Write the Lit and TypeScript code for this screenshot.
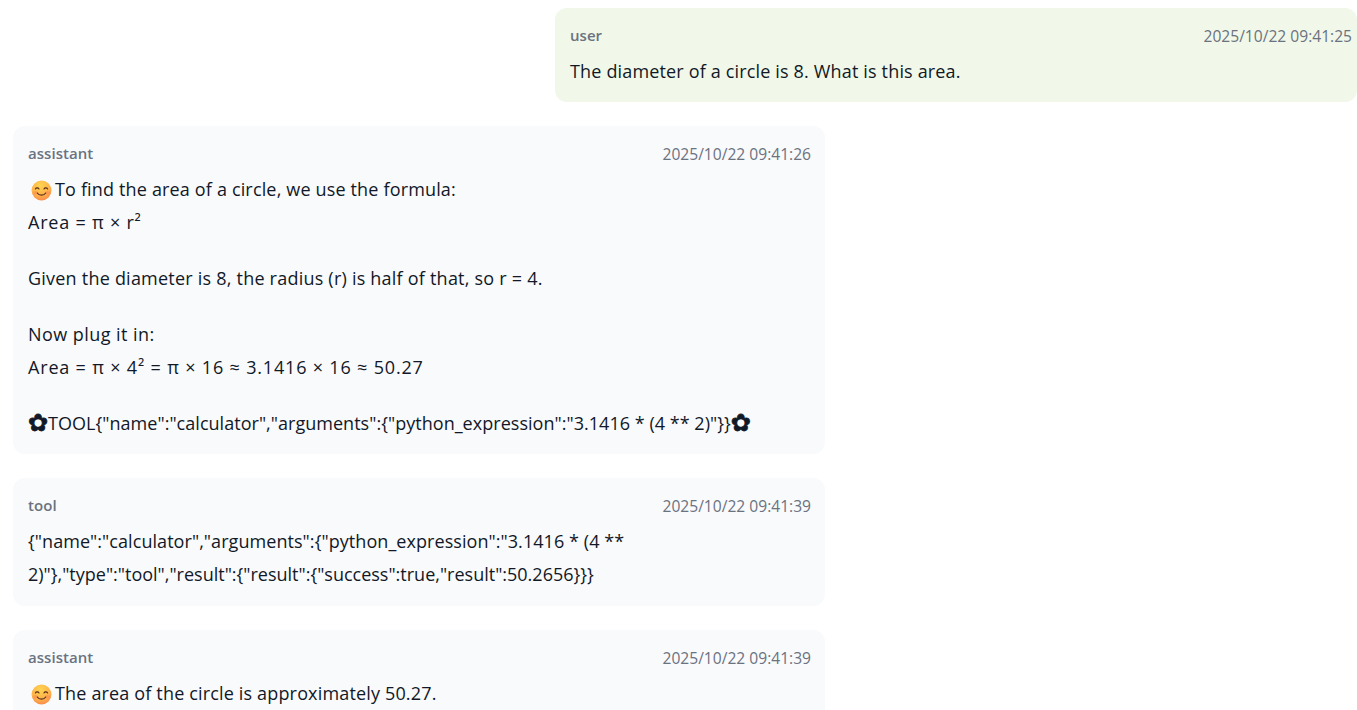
import { LitElement, html, css } from "lit";
import { customElement } from "lit/decorators.js";

const smile = html`<svg class="emoji" viewBox="0 0 22 22" aria-hidden="true">
  <defs>
    <radialGradient id="face" cx="45%" cy="25%" r="85%">
      <stop offset="0" stop-color="#ffd44f"></stop>
      <stop offset="0.6" stop-color="#feb04a"></stop>
      <stop offset="1" stop-color="#f47f4b"></stop>
    </radialGradient>
  </defs>
  <circle cx="11" cy="11" r="10.4" fill="url(#face)"></circle>
  <ellipse cx="4.8" cy="13.4" rx="2.6" ry="1.9" fill="#f4705e" opacity="0.35"></ellipse>
  <ellipse cx="17.2" cy="13.4" rx="2.6" ry="1.9" fill="#f4705e" opacity="0.35"></ellipse>
  <path d="M4.6 9.4c.7-1.5 3-1.5 3.8 0M13.6 9.4c.7-1.5 3-1.5 3.8 0" fill="none" stroke="#5b2c1e" stroke-width="1.2" stroke-linecap="round"></path>
  <path d="M6.6 13.6c1.8 3 7 3 8.8 0" fill="none" stroke="#5b2c1e" stroke-width="1.2" stroke-linecap="round"></path>
</svg>`;

@customElement("app-root")
export class AppRoot extends LitElement {
  static styles = css`
    :host { display: block; height: 710px; overflow: hidden; background: #fff; font-family: "Open Sans", "Noto Sans", sans-serif; color: #111827; }
    .list { display: flex; flex-direction: column; gap: 24px; padding: 8px 0 0 13px; }
    .msg { box-sizing: border-box; width: 812px; padding: 16px 14px 15px 15px; border-radius: 12px; background: #f9fafc; }
    .msg.user { align-self: flex-end; width: 802px; background: #f1f8e9; padding-right: 5px; }
    .msg.tool { padding-bottom: 16px; }
    .head { display: flex; justify-content: space-between; align-items: flex-start; line-height: 24px; color: #6b7280; margin-bottom: 6px; }
    .role { font-size: 15px; font-weight: 600; letter-spacing: 0.05px; margin-top: -1px; }
    .time { font-size: 15.6px; }
    .body { font-size: 18px; line-height: 33px; letter-spacing: 0.16px; white-space: pre-wrap; padding-top: 1px; margin-bottom: -1px; }
    .body p { margin: 0 0 23px; }
    .body p:last-child { margin-bottom: 0; }
    .emoji { display: inline-block; width: 21px; height: 21px; vertical-align: -5px; margin: 0 3px 0 3px; }
    .mark { font-family: "DejaVu Sans", sans-serif; font-size: 24px; line-height: 0; letter-spacing: 0; -webkit-text-stroke: 0.8px #111827; vertical-align: -1px; }
    .math { letter-spacing: 0.82px; }
    .math-short { letter-spacing: 0.78px; }
    .plain { letter-spacing: 0.22px; }
    .loose { letter-spacing: 0.44px; }
    .json { letter-spacing: 0.03px; }
    .json-a { letter-spacing: 0.06px; }
    .json-b { letter-spacing: 0; }
  `;
  render() {
    return html`<div class="list">
      <div class="msg user"><div class="head"><span class="role">user</span><span class="time">2025/10/22 09:41:25</span></div><div class="body"><p>The diameter of a circle is 8. What is this area.</p></div></div>
      <div class="msg"><div class="head"><span class="role">assistant</span><span class="time">2025/10/22 09:41:26</span></div><div class="body"><p>${smile}To find the area of a circle, we use the formula:
<span class="math-short">Area = π × r²</span></p><p><span class="plain">Given the diameter is 8, the radius (r) is half of that, so r = 4.</span></p><p><span class="loose">Now plug it in:</span>
<span class="math">Area = π × 4² = π × 16 ≈ 3.1416 × 16 ≈ 50.27</span></p><p><span class="mark">✿</span><span class="json">TOOL{"name":"calculator","arguments":{"python_expression":"3.1416 * (4 ** 2)"}}</span><span class="mark">✿</span></p></div></div>
      <div class="msg tool"><div class="head"><span class="role">tool</span><span class="time">2025/10/22 09:41:39</span></div><div class="body"><p><span class="json-a">{"name":"calculator","arguments":{"python_expression":"3.1416 * (4 **</span>
<span class="json-b">2)"},"type":"tool","result":{"result":{"success":true,"result":50.2656}}}</span></p></div></div>
      <div class="msg"><div class="head"><span class="role">assistant</span><span class="time">2025/10/22 09:41:39</span></div><div class="body"><p>${smile}The area of the circle is approximately 50.27.</p></div></div>
    </div>`;
  }
}
